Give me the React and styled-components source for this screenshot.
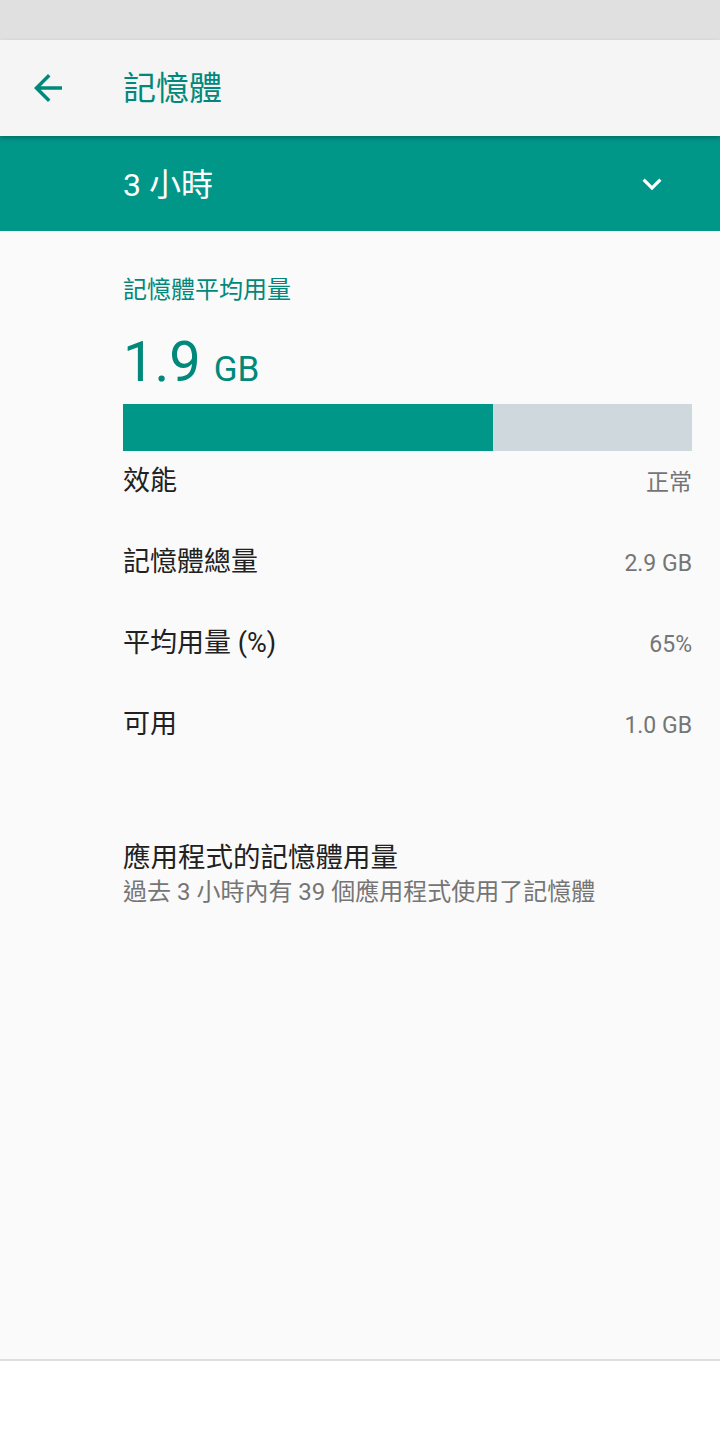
import React from 'react'
import styled, { createGlobalStyle } from 'styled-components'

const GlobalStyle = createGlobalStyle`
  html, body {
    margin: 0;
    padding: 0;
    background: #ffffff;
  }
  body {
    font-family: Roboto, "Noto Sans CJK TC", sans-serif;
  }
`

const Screen = styled.div`
  width: 720px;
  min-height: 1440px;
  display: flex;
  flex-direction: column;
  background: #fafafa;
`

const StatusBar = styled.div`
  height: 40px;
  background: #e0e0e0;
`

const Toolbar = styled.div`
  position: relative;
  z-index: 2;
  height: 96px;
  display: flex;
  align-items: center;
  background: #f5f5f5;
  box-shadow: 0 2px 4px rgba(0, 0, 0, 0.25);
`

const BackButton = styled.div`
  width: 123px;
  padding-left: 27px;
  box-sizing: border-box;
  display: flex;
  align-items: center;
`

const Title = styled.h1`
  margin: 2px 0 0;
  font-size: 33px;
  font-weight: 400;
  color: #00897b;
  line-height: 40px;
`

const RangeBar = styled.div`
  height: 95px;
  display: flex;
  align-items: center;
  justify-content: space-between;
  padding: 0 49px 0 123px;
  background: #009688;
  color: #ffffff;
`

const RangeLabel = styled.span`
  font-size: 32px;
  line-height: 40px;
  margin-top: 2px;
`

const Content = styled.div`
  flex: 1;
  padding: 43px 28px 0 123px;
`

const Overline = styled.div`
  font-size: 24px;
  line-height: 32px;
  color: #00897b;
`

const BigValue = styled.div`
  margin-top: 21px;
  height: 70px;
  line-height: 70px;
  color: #00897b;
  display: flex;
  align-items: baseline;
  gap: 13px;
`

const Number = styled.span`
  font-size: 56px;
`

const Unit = styled.span`
  font-size: 35px;
`

const Meter = styled.div`
  margin-top: 7px;
  height: 47px;
  background: #cfd8dc;
  display: flex;
`

const MeterFill = styled.div`
  height: 100%;
  background: #009688;
`

const StatList = styled.div`
  margin-top: 4px;
  display: flex;
  flex-direction: column;
  gap: 29px;
`

const StatRow = styled.div`
  height: 52px;
  line-height: 52px;
  display: flex;
  align-items: baseline;
  justify-content: space-between;
`

const StatLabel = styled.span`
  font-size: 27px;
  color: #212121;
`

const StatValue = styled.span`
  font-size: 23px;
  color: #757575;
`

const AppSection = styled.div`
  margin-top: 91px;
`

const SectionTitle = styled.div`
  font-size: 27.5px;
  line-height: 34px;
  color: #212121;
`

const SectionSub = styled.div`
  font-size: 24px;
  line-height: 34px;
  color: #757575;
`

const NavArea = styled.div`
  height: 79px;
  background: #ffffff;
  border-top: 2px solid #dedede;
`

const stats = [
  { label: '效能', value: '正常' },
  { label: '記憶體總量', value: '2.9 GB' },
  { label: '平均用量 (%)', value: '65%' },
  { label: '可用', value: '1.0 GB' },
]

export default function App() {
  const used = 65

  return (
    <Screen>
      <GlobalStyle />
      <StatusBar />
      <Toolbar>
        <BackButton>
          <svg width="42" height="42" viewBox="0 0 24 24">
            <path fill="#00897b" d="M20 11H7.83l5.59-5.59L12 4l-8 8 8 8 1.41-1.41L7.83 13H20v-2z" />
          </svg>
        </BackButton>
        <Title>記憶體</Title>
      </Toolbar>
      <RangeBar>
        <RangeLabel>3 小時</RangeLabel>
        <svg width="38" height="38" viewBox="0 0 24 24">
          <path fill="#ffffff" d="M16.59 8.59L12 13.17 7.41 8.59 6 10l6 6 6-6z" />
        </svg>
      </RangeBar>
      <Content>
        <Overline>記憶體平均用量</Overline>
        <BigValue>
          <Number>1.9</Number>
          <Unit>GB</Unit>
        </BigValue>
        <Meter>
          <MeterFill style={{ width: used + '%' }} />
        </Meter>
        <StatList>
          {stats.map((s, i) => (
            <StatRow key={i}>
              <StatLabel>{s.label}</StatLabel>
              <StatValue>{s.value}</StatValue>
            </StatRow>
          ))}
        </StatList>
        <AppSection>
          <SectionTitle>應用程式的記憶體用量</SectionTitle>
          <SectionSub>過去 3 小時內有 39 個應用程式使用了記憶體</SectionSub>
        </AppSection>
      </Content>
      <NavArea />
    </Screen>
  )
}
